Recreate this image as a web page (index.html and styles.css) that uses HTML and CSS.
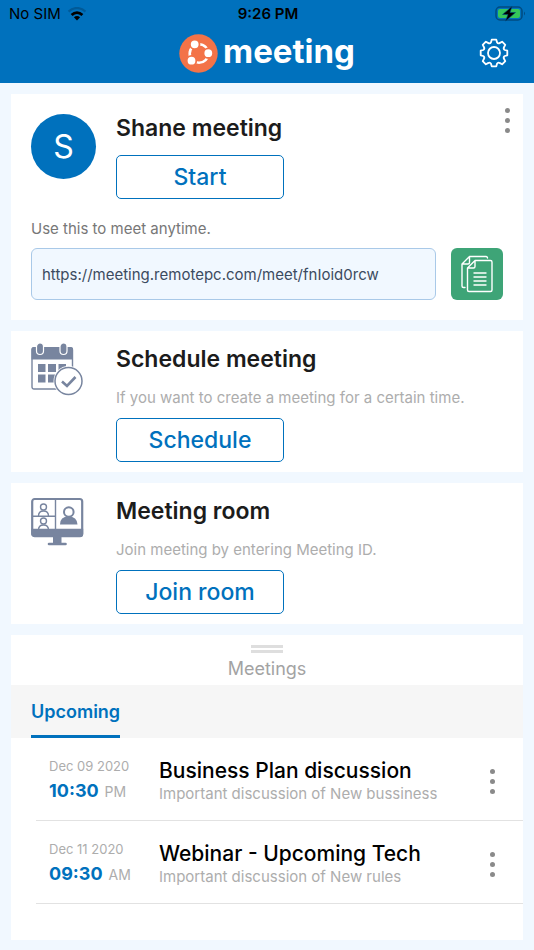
FILE: index.html
```html
<!DOCTYPE html>
<html lang="en">
<head>
<meta charset="utf-8">
<meta name="viewport" content="width=device-width, initial-scale=1">
<title>Meeting</title>
<link rel="stylesheet" href="styles.css">
</head>
<body>
<header class="header">
  <div class="status">
    <div class="status-left">
      <span>No SIM</span>
      <svg width="20" height="14" viewBox="0 0 20 14" fill="none" stroke="#000">
        <path d="M1.6 4.7C6.4-.1 13.6-.1 18.4 4.7" stroke="#005a98" stroke-width="2.4"/>
        <path d="M4.600 8C7.900 4.900 12.100 4.900 15.400 8" stroke-width="2.800"/>
        <path d="M6.900 10.300Q10 7.800 13.100 10.300L10 13.500Z" fill="#000" stroke="none"/>
      </svg>
    </div>
    <span class="clock">9:26 PM</span>
    <svg class="battery" width="32" height="16" viewBox="0 0 32 16">
      <rect x="1" y="1" width="26" height="13" rx="4" fill="none" stroke="#004b80" stroke-width="1.5"/>
      <rect x="3" y="3" width="22" height="9" rx="2" fill="#35c759"/>
      <path d="M29 5.5Q31 7.5 29 9.5Z" fill="#004b80"/>
      <path d="M17 .5L7.5 8.5H13L10.5 15 20.5 6.5H15Z" fill="#000" stroke="#004b80" stroke-width=".6"/>
    </svg>
  </div>
  <div class="brandbar">
    <div class="brand">
      <svg width="39" height="39" viewBox="0 0 39 39">
        <circle cx="19.500" cy="19.500" r="19.200" fill="#f37348"/>
        <circle cx="20" cy="19.500" r="9.300" fill="none" stroke="#fff" stroke-width="2.600"/>
        <g fill="#fff" stroke="#f37348" stroke-width="1.800">
          <circle cx="15.700" cy="10.300" r="4.800"/>
          <circle cx="29.300" cy="19.200" r="4.800"/>
          <circle cx="12.500" cy="26.700" r="4.800"/>
        </g>
      </svg>
      <h1>meeting</h1>
    </div>
    <button class="settings" type="button" aria-label="Settings">
      <svg width="30" height="30" viewBox="0 0 30 30" fill="none" stroke="#fff" stroke-width="1.800" stroke-linejoin="round">
        <circle cx="15" cy="15" r="6"/>
        <path d="M12.700 1.700H17.300L18 4.200Q19 6 21 4.900L23.100 3.700 26.300 6.900 25.100 9Q24 11 25.800 12L28.300 12.700V17.300L25.800 18Q24 19 25.100 21L26.300 23.100 23.100 26.300 21 25.100Q19 24 18 25.800L17.300 28.300H12.700L12 25.800Q11 24 9 25.100L6.900 26.300 3.700 23.100 4.900 21Q6 19 4.200 18L1.700 17.300V12.700L4.200 12Q6 11 4.900 9L3.700 6.900 6.900 3.700 9 4.900Q11 6 12 4.200Z"/>
      </svg>
    </button>
  </div>
</header>

<main class="main">
  <section class="card personal">
    <div class="media">
      <div class="avatar">S</div>
      <div class="body">
        <h2>Shane meeting</h2>
        <button class="action" type="button">Start</button>
      </div>
      <button class="kebab" type="button" aria-label="Meeting options"><i></i><i></i><i></i></button>
    </div>
    <label class="hint" for="link">Use this to meet anytime.</label>
    <div class="linkrow">
      <input id="link" type="text" readonly value="https://meeting.remotepc.com/meet/fnIoid0rcw">
      <button class="copy" type="button" aria-label="Copy link">
        <svg width="32" height="38" viewBox="0 0 32 38" fill="none" stroke="#fff" stroke-width="1.400" stroke-linejoin="round" stroke-linecap="round">
          <path d="M26.500 3Q26.500 1.500 25 1.500H8.500L1 9V31Q1 32.500 2.500 32.500H4M8.500 1.500V7.500Q8.500 9 7 9H1"/>
          <path d="M14 5.500H29.500Q31 5.500 31 7V35Q31 36.500 29.500 36.500H8Q6.500 36.500 6.500 35V13ZM14 5.500V11.500Q14 13 12.500 13H6.500"/>
          <path d="M13 18H25M13 22H25M13 26H25M13 30H25"/>
        </svg>
      </button>
    </div>
  </section>

  <section class="card task">
    <div class="media">
      <svg class="icon" width="53" height="53" viewBox="0 0 53 53" fill="#78859f">
        <rect x="1" y="5" width="40.500" height="41" rx="2" fill="#fff" stroke="#78859f" stroke-width="1.400"/>
        <path d="M.500 16.500V6Q.500 4 2.500 4H40Q42 4 42 6V16.500Z"/>
        <rect x="5.500" y="0" width="7" height="11.500" rx="3.500" stroke="#fff" stroke-width="1.200"/>
        <rect x="29" y="0" width="7" height="11.500" rx="3.500" stroke="#fff" stroke-width="1.200"/>
        <path d="M7 21h7.500v8H7zM17 21h8v8h-8zM27.500 21H35v8h-7.500zM7 31.500h7.500v8H7zM17 31.500h8v8h-8z"/>
        <circle cx="37.500" cy="38" r="15" fill="#fff"/>
        <circle cx="37.500" cy="38" r="13.500" fill="#fff" stroke="#78859f" stroke-width="1.500"/>
        <path d="M31 38.500L36 43 44.500 34" fill="none" stroke="#78859f" stroke-width="2.600"/>
      </svg>
      <div class="body">
        <h2>Schedule meeting</h2>
        <p>If you want to create a meeting for a certain time.</p>
        <button class="action" type="button">Schedule</button>
      </div>
    </div>
  </section>

  <section class="card task">
    <div class="media">
      <svg class="icon" width="53" height="53" viewBox="0 0 53 53" fill="none" stroke="#78859f" stroke-width="1.400">
        <rect x="1.200" y="4" width="50" height="37" rx="2.500" stroke-width="2.200"/>
        <path d="M1 34.500H51.500V39Q51.500 41.500 49 41.500H3.500Q1 41.500 1 39Z" fill="#78859f"/>
        <path d="M24.500 4V35M2 21.200H24.500"/>
        <circle cx="12.500" cy="12" r="3"/>
        <path d="M7.500 21Q7.500 16 12.500 16T17.500 21"/>
        <circle cx="12.500" cy="26" r="3"/>
        <path d="M7.500 35Q7.500 30 12.500 30T17.500 35"/>
        <path d="M29 29.500Q29 21.500 37.500 21.500T46.500 29.500Z" fill="#78859f" stroke="none"/>
        <circle cx="37.800" cy="17" r="4.800" fill="#fff" stroke-width="2"/>
        <path d="M22 41H30.500V48H22Z" fill="#78859f" stroke="none"/>
        <path d="M18 49H34.500" stroke-width="2.600" stroke-linecap="round"/>
      </svg>
      <div class="body">
        <h2>Meeting room</h2>
        <p>Join meeting by entering Meeting ID.</p>
        <button class="action" type="button">Join room</button>
      </div>
    </div>
  </section>

  <section class="sheet">
    <div class="grip"></div>
    <h3>Meetings</h3>
    <nav class="tabs"><button class="tab" type="button">Upcoming</button></nav>
    <ul class="list">
      <li class="item">
        <div class="when">
          <div class="date">Dec 09 2020</div>
          <div class="time"><b>10:30</b> PM</div>
        </div>
        <div class="what">
          <h4>Business Plan discussion</h4>
          <p>Important discussion of New bussiness</p>
        </div>
        <button class="kebab" type="button" aria-label="Options"><i></i><i></i><i></i></button>
      </li>
      <li class="item">
        <div class="when">
          <div class="date">Dec 11 2020</div>
          <div class="time"><b>09:30</b> AM</div>
        </div>
        <div class="what">
          <h4>Webinar - Upcoming Tech</h4>
          <p>Important discussion of New rules</p>
        </div>
        <button class="kebab" type="button" aria-label="Options"><i></i><i></i><i></i></button>
      </li>
    </ul>
  </section>
</main>
</body>
</html>
```
FILE: styles.css
```css
* { box-sizing: border-box; }

body {
  margin: 0;
  min-height: 100vh;
  display: flex;
  flex-direction: column;
  background: #f1f8ff;
  color: #1c1c1c;
  font-family: Inter, "Liberation Sans", sans-serif;
  font-size: 15px;
  line-height: 20px;
}

h1, h2, h3, h4, p, ul { margin: 0; padding: 0; }
button { padding: 0; border: 0; background: none; font: inherit; cursor: pointer; }
svg { display: block; flex: none; }

.header { background: #0071bd; padding-bottom: 9px; }

.status {
  display: grid;
  grid-template-columns: 1fr auto 1fr;
  align-items: center;
  height: 28px;
  padding: 0 7px 0 9px;
  color: #000;
}
.status-left { display: flex; align-items: center; gap: 6px; }
.clock { font-weight: 600; }
.battery { justify-self: end; }

.brandbar {
  display: grid;
  grid-template-columns: 1fr auto 1fr;
  align-items: center;
  height: 46px;
  padding: 4px 25px 0;
}
.brand { grid-column: 2; display: flex; align-items: center; gap: 5px; }
.brand h1 {
  color: #fff;
  font-size: 33px;
  line-height: 36px;
  font-weight: 700;
  padding-bottom: 4px;
}
.settings { justify-self: end; }

.main {
  flex: 1;
  display: flex;
  flex-direction: column;
  gap: 11px;
  padding: 11px 11px 10px;
}
.card { background: #fff; padding: 20px; }
.media { display: grid; grid-template-columns: 85px 1fr auto; align-items: start; }

.avatar {
  width: 65px;
  height: 65px;
  border-radius: 50%;
  background: #0071bd;
  color: #fff;
  font-size: 32px;
  line-height: 65px;
  text-align: center;
}
.body { display: flex; flex-direction: column; align-items: flex-start; }
.body h2 { font-size: 23px; line-height: 28px; font-weight: 600; }
.action {
  width: 168px;
  height: 44px;
  border: 1px solid #0071bd;
  border-radius: 5px;
  color: #0071bd;
  font-size: 23px;
  font-weight: 500;
}
.personal .action { margin-top: 13px; }

.kebab {
  display: flex;
  flex-direction: column;
  align-items: center;
  gap: 5px;
  width: 15px;
}
.kebab i { width: 5px; height: 5px; border-radius: 50%; background: #8a8a8a; }
.personal .kebab { margin: -6px -12px 0 0; }

.hint { display: block; margin: 20px 0 9px; color: #777; }
.linkrow { display: flex; gap: 15px; }
.linkrow input {
  flex: 1;
  min-width: 0;
  height: 52px;
  padding: 0 10px;
  border: 1px solid #a9c9e8;
  border-radius: 6px;
  background: #f1f8ff;
  color: #3c4b60;
  font: inherit;
}
.copy {
  display: grid;
  place-items: center;
  width: 52px;
  height: 52px;
  border-radius: 6px;
  background: #3ea477;
}

.task { padding: 14px 20px 10px; }
.task .icon { margin-top: -2px; }
.task p { margin: 15px 0 10px; color: #adadad; }

.sheet { flex: 1; background: #fff; padding-top: 10px; }
.grip {
  width: 32px;
  height: 8px;
  margin: 0 auto;
  border: solid #dedede;
  border-width: 3px 0;
}
.sheet h3 {
  margin: 6px 0;
  color: #a3a3a3;
  font-size: 18px;
  line-height: 20px;
  font-weight: 400;
  text-align: center;
}
.tabs { display: flex; height: 53px; padding: 0 20px; background: #f6f6f6; }
.tab {
  border-bottom: 3px solid #0071bd;
  padding-top: 3px;
  color: #0071bd;
  font-size: 18px;
  font-weight: 600;
}
.list { list-style: none; padding-left: 25px; }
.item {
  display: grid;
  grid-template-columns: 110px 1fr auto;
  align-items: center;
  height: 83px;
  padding: 4px 23px 0 13px;
  border-bottom: 1px solid #e2e2e2;
}
.when { color: #adadad; }
.date { font-size: 13px; line-height: 20px; }
.time { font-size: 14px; line-height: 30px; }
.time b { margin-right: 2px; color: #0071bd; font-size: 18px; font-weight: 700; }
.what h4 { color: #000; font-size: 21px; line-height: 26px; font-weight: 500; }
.what p { color: #adadad; }
```
